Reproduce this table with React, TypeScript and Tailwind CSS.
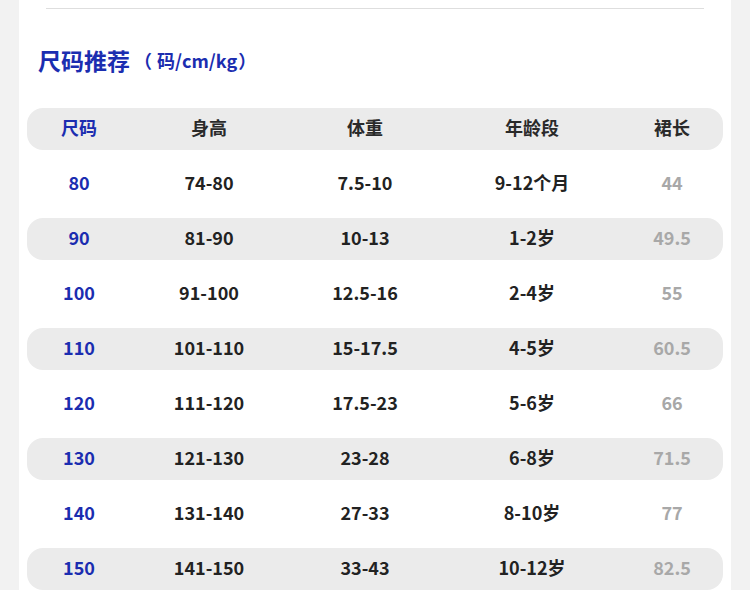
import React from 'react';

const rows = [
  ['80', '74-80', '7.5-10', '9-12个月', '44'],
  ['90', '81-90', '10-13', '1-2岁', '49.5'],
  ['100', '91-100', '12.5-16', '2-4岁', '55'],
  ['110', '101-110', '15-17.5', '4-5岁', '60.5'],
  ['120', '111-120', '17.5-23', '5-6岁', '66'],
  ['130', '121-130', '23-28', '6-8岁', '71.5'],
  ['140', '131-140', '27-33', '8-10岁', '77'],
  ['150', '141-150', '33-43', '10-12岁', '82.5'],
];

const cols = 'grid grid-cols-[104px_156px_156px_178px_102px] items-center h-[42px] pb-[4px] rounded-[16px]';

export default function App() {
  return (
    <div className="w-[750px] h-[590px] bg-[#f2f2f2] overflow-hidden" style={{ fontFamily: '"Noto Sans CJK SC", "Noto Sans", sans-serif' }}>
      <div className="ml-[19px] w-[712px] h-full bg-white pt-[8px]">
        <div className="ml-[27px] w-[658px] h-px bg-[#dedede]" />
        <div className="ml-[19px] mt-[35px] h-[32px] flex items-center text-[#1b2db0] font-bold">
          <span className="text-[23px]">尺码推荐</span>
          <span className="text-[18px] ml-[4px]">（</span>
          <span className="text-[18px] ml-[5px]">码/cm/kg</span>
          <span className="text-[18px] ml-[1px]">）</span>
        </div>
        <div className="mx-[8px] mt-[32px] flex flex-col gap-[13px] text-[18px] font-bold text-center">
          <div className={`${cols} bg-[#ebebeb] text-[#2a2a2a]`}>
            <div className="text-[#1b2db0]">尺码</div>
            <div>身高</div>
            <div>体重</div>
            <div>年龄段</div>
            <div>裙长</div>
          </div>
          {rows.map((r, i) => (
            <div key={r[0]} className={`${cols} ${i % 2 === 1 ? 'bg-[#ebebeb]' : ''} text-[#222]`}>
              <div className="text-[#1b2db0]">{r[0]}</div>
              <div>{r[1]}</div>
              <div>{r[2]}</div>
              <div>{r[3]}</div>
              <div className="text-[#a8a8a8]">{r[4]}</div>
            </div>
          ))}
        </div>
      </div>
    </div>
  );
}
